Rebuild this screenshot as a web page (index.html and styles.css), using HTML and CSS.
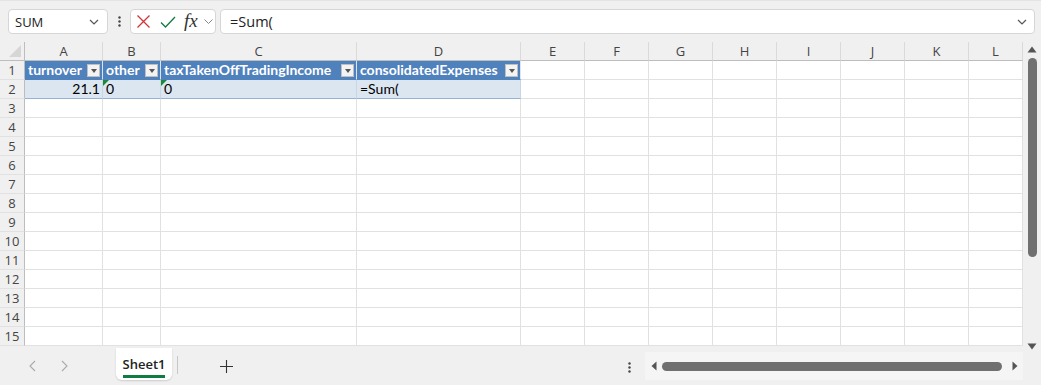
FILE: index.html
```html
<!DOCTYPE html>
<html lang="en">
<head>
    <meta charset="UTF-8">
    <meta name="viewport" content="width=device-width, initial-scale=1.0">
    <title>Book1 - Excel</title>
    <link rel="stylesheet" href="styles.css">
</head>
<body>
    <div class="app">
        <div class="toolbar">
            <div class="namebox">
                <span>SUM</span>
                <svg class="chev" width="10" height="6" viewBox="0 0 10 6"><path d="M1 1l4 4 4-4" fill="none" stroke="#555" stroke-width="1.2"/></svg>
            </div>
            <div class="kebab">
                <svg width="3" height="11" viewBox="0 0 3 11"><circle cx="1.5" cy="1.5" r="1.2" fill="#444"/><circle cx="1.5" cy="5.5" r="1.2" fill="#444"/><circle cx="1.5" cy="9.5" r="1.2" fill="#444"/></svg>
            </div>
            <div class="fx-tools">
                <svg class="cancel" width="13" height="13" viewBox="0 0 13 13"><path d="M0.5 0.5l12 12M12.5 0.5l-12 12" stroke="#d13438" stroke-width="1.3"/></svg>
                <svg class="enter" width="16" height="12" viewBox="0 0 16 12"><path d="M1 6.5l4.5 4.5L15 1" fill="none" stroke="#107c41" stroke-width="1.3"/></svg>
                <span class="fx">fx</span>
                <svg class="fx-chev" width="9" height="6" viewBox="0 0 9 6"><path d="M0.5 0.5l4 4 4-4" fill="none" stroke="#888" stroke-width="1"/></svg>
            </div>
            <div class="formula">
                <span>=Sum(</span>
                <svg class="chev" width="10" height="6" viewBox="0 0 10 6"><path d="M1 1l4 4 4-4" fill="none" stroke="#555" stroke-width="1.2"/></svg>
            </div>
        </div>

        <div class="main">
            <div class="sheet" id="sheet">
                <div class="row col-head">
                    <div class="corner"><span class="corner-tri"></span></div>
                    <div>A</div><div>B</div><div>C</div><div>D</div><div>E</div><div>F</div>
                    <div>G</div><div>H</div><div>I</div><div>J</div><div>K</div><div>L</div>
                </div>
                <div class="row">
                    <div class="rownum">1</div>
                    <div class="cell th"><span>turnover</span><span class="filter"></span></div>
                    <div class="cell th"><span>other</span><span class="filter"></span></div>
                    <div class="cell th"><span>taxTakenOffTradingIncome</span><span class="filter"></span></div>
                    <div class="cell th"><span>consolidatedExpenses</span><span class="filter"></span></div>
                    <div class="cell"></div><div class="cell"></div><div class="cell"></div><div class="cell"></div>
                    <div class="cell"></div><div class="cell"></div><div class="cell"></div><div class="cell"></div>
                </div>
                <div class="row">
                    <div class="rownum">2</div>
                    <div class="cell td num">21.1</div>
                    <div class="cell td flag">0</div>
                    <div class="cell td flag">0</div>
                    <div class="cell td">=Sum(</div>
                    <div class="cell"></div><div class="cell"></div><div class="cell"></div><div class="cell"></div>
                    <div class="cell"></div><div class="cell"></div><div class="cell"></div><div class="cell"></div>
                </div>
            </div>
            <div class="vscroll">
                <svg width="10" height="7" viewBox="0 0 10 7"><path d="M5 0.5L9.5 6.5H0.5z" fill="#555"/></svg>
                <div class="vthumb"></div>
                <svg class="down" width="10" height="7" viewBox="0 0 10 7"><path d="M5 6.5L9.5 0.5H0.5z" fill="#555"/></svg>
            </div>
        </div>

        <div class="bottom">
            <div class="nav">
                <svg width="7" height="12" viewBox="0 0 7 12"><path d="M6 1L1 6l5 5" fill="none" stroke="#aaa" stroke-width="1.1"/></svg>
                <svg width="7" height="12" viewBox="0 0 7 12"><path d="M1 1l5 5-5 5" fill="none" stroke="#aaa" stroke-width="1.1"/></svg>
            </div>
            <div class="tab"><span>Sheet1</span></div>
            <div class="tab-sep"></div>
            <div class="add">
                <svg width="13" height="13" viewBox="0 0 13 13"><path d="M6.5 0v13M0 6.5h13" stroke="#333" stroke-width="1.1"/></svg>
            </div>
            <div class="bottom-kebab">
                <svg width="3" height="11" viewBox="0 0 3 11"><circle cx="1.5" cy="1.5" r="1.2" fill="#444"/><circle cx="1.5" cy="5.5" r="1.2" fill="#444"/><circle cx="1.5" cy="9.5" r="1.2" fill="#444"/></svg>
            </div>
            <div class="hscroll">
                <svg width="6" height="10" viewBox="0 0 6 10"><path d="M0.5 5L5.5 0.5V9.5z" fill="#555"/></svg>
                <div class="hthumb"></div>
                <svg width="6" height="10" viewBox="0 0 6 10"><path d="M5.5 5L0.5 0.5V9.5z" fill="#555"/></svg>
            </div>
        </div>
    </div>

    <script>
        const sheet = document.getElementById('sheet');

        // empty rows 3..15
        for (let r = 3; r <= 15; r++) {
            const row = document.createElement('div');
            row.className = 'row';
            let html = '<div class="rownum">' + r + '</div>';
            for (let c = 0; c < 12; c++) {
                html += '<div class="cell"></div>';
            }
            row.innerHTML = html;
            sheet.appendChild(row);
        }
    </script>
</body>
</html>
```

FILE: styles.css
```css
body {
    margin: 0;
    padding: 0;
    font-family: "Open Sans", "Noto Sans", sans-serif;
    background-color: #f0f0f0;
    overflow: hidden;
}
.app {
    width: 1041px;
    height: 385px;
    display: flex;
    flex-direction: column;
    background-color: #f0f0f0;
}

/* formula bar */
.toolbar {
    height: 42px;
    box-sizing: border-box;
    padding: 8px 6px 0 8px;
    display: flex;
    align-items: flex-start;
    border-top: 1px solid #e4e4e4;
}
.namebox,
.fx-tools,
.formula {
    height: 25px;
    box-sizing: border-box;
    background-color: #fff;
    border: 1px solid #d6d6d6;
    border-radius: 4px;
    display: flex;
    align-items: center;
}
.namebox {
    width: 100px;
    padding: 0 8px 0 6px;
    font-size: 13px;
    color: #222;
    justify-content: space-between;
}
.kebab {
    width: 22px;
    height: 25px;
    display: flex;
    align-items: center;
    justify-content: center;
}
.fx-tools {
    width: 86px;
    padding-left: 6px;
}
.cancel {
    margin-right: 10px;
}
.enter {
    margin-right: 8px;
}
.fx {
    font-family: "Liberation Serif", serif;
    font-style: italic;
    font-size: 19px;
    color: #333;
    line-height: 1;
    margin-top: -2px;
}
.fx-chev {
    margin-left: 6px;
}
.formula {
    flex: 1;
    margin-left: 4px;
    padding: 0 7px 0 9px;
    font-size: 14.5px;
    color: #222;
    justify-content: space-between;
}

/* grid */
.main {
    display: flex;
    height: 304px;
}
.sheet {
    width: 1023px;
    background-color: #fff;
    overflow: hidden;
}
.row {
    display: grid;
    grid-template-columns: 25px 78px 58px 196px 164px repeat(7, 64px) 54px;
    height: 19px;
}
.row > div {
    box-sizing: border-box;
    border-right: 1px solid #e1e1e1;
    border-bottom: 1px solid #e1e1e1;
}
.col-head > div {
    background-color: #f0f0f0;
    border-right: 1px solid #dadada;
    border-bottom: 1px solid #bdbdbd;
    font-size: 13px;
    color: #444;
    text-align: center;
    line-height: 18px;
}
.col-head > .corner {
    position: relative;
    border-right: 1px solid #bdbdbd;
}
.corner-tri {
    position: absolute;
    right: 3px;
    bottom: 3px;
    width: 0;
    height: 0;
    border-left: 12px solid transparent;
    border-bottom: 12px solid #d6d6d6;
}
.rownum {
    background-color: #f0f0f0;
    font-size: 13px;
    color: #444;
    text-align: center;
    line-height: 18px;
    border-right-color: #bdbdbd !important;
}
.cell {
    font-family: "Lato", "Liberation Sans", sans-serif;
    font-size: 14px;
    color: #000;
    line-height: 18px;
    white-space: nowrap;
    overflow: hidden;
}
.th {
    background-color: #4f81bd;
    color: #fff;
    font-weight: bold;
    display: flex;
    align-items: center;
    padding-left: 3px;
    border-right-color: #dbe5f1 !important;
    border-bottom-color: #4f81bd !important;
}
.filter {
    margin-left: auto;
    margin-right: 2px;
    width: 13px;
    height: 13px;
    box-sizing: border-box;
    background-color: #f3f3f3;
    border: 1px solid #bfbfbf;
    position: relative;
}
.filter::after {
    content: "";
    position: absolute;
    left: 3px;
    top: 4px;
    border-left: 3px solid transparent;
    border-right: 3px solid transparent;
    border-top: 4px solid #555;
}
.td {
    background-color: #dce6f1;
    padding-left: 3px;
    border-right-color: #c9d6e6 !important;
    border-bottom-color: #95b3d7 !important;
}
.td.num {
    text-align: right;
    padding-right: 2px;
}
.flag {
    position: relative;
}
.flag::before {
    content: "";
    position: absolute;
    left: 0;
    top: 0;
    border-right: 6px solid transparent;
    border-top: 6px solid #1a8a3a;
}

/* vertical scrollbar */
.vscroll {
    width: 18px;
    display: flex;
    flex-direction: column;
    align-items: center;
    padding-top: 4px;
    box-sizing: border-box;
}
.vthumb {
    width: 9px;
    height: 199px;
    margin-top: 5px;
    background-color: #707070;
    border-radius: 5px;
}
.vscroll .down {
    margin-top: auto;
    margin-bottom: -4px;
}

/* sheet tabs */
.bottom {
    height: 39px;
    display: flex;
    align-items: flex-start;
}
.nav {
    width: 116px;
    display: flex;
    gap: 25px;
    padding: 14px 0 0 29px;
    box-sizing: border-box;
}
.tab {
    width: 56px;
    height: 32px;
    margin-top: 2px;
    box-sizing: border-box;
    background-color: #fff;
    border-radius: 0 0 6px 6px;
    box-shadow: 0 1px 2px rgba(0, 0, 0, 0.15);
    display: flex;
    justify-content: center;
    padding-top: 8px;
}
.tab span {
    font-size: 13px;
    font-weight: 600;
    color: #222;
    height: 19px;
    border-bottom: 3px solid #107c41;
    line-height: 17px;
}
.tab-sep {
    width: 1px;
    height: 18px;
    margin: 10px 0 0 5px;
    background-color: #c8c8c8;
}
.add {
    margin: 10px 0 0 42px;
}
.bottom-kebab {
    margin: 10px 0 0 395px;
}
.hscroll {
    margin: 6px 0 0 14px;
    width: 378px;
    height: 28px;
    background-color: #f5f5f5;
    display: flex;
    align-items: center;
    padding: 0 5px 0 6px;
    box-sizing: border-box;
}
.hthumb {
    flex: 1;
    height: 9px;
    margin: 0 10px 0 5px;
    background-color: #707070;
    border-radius: 5px;
}
```
